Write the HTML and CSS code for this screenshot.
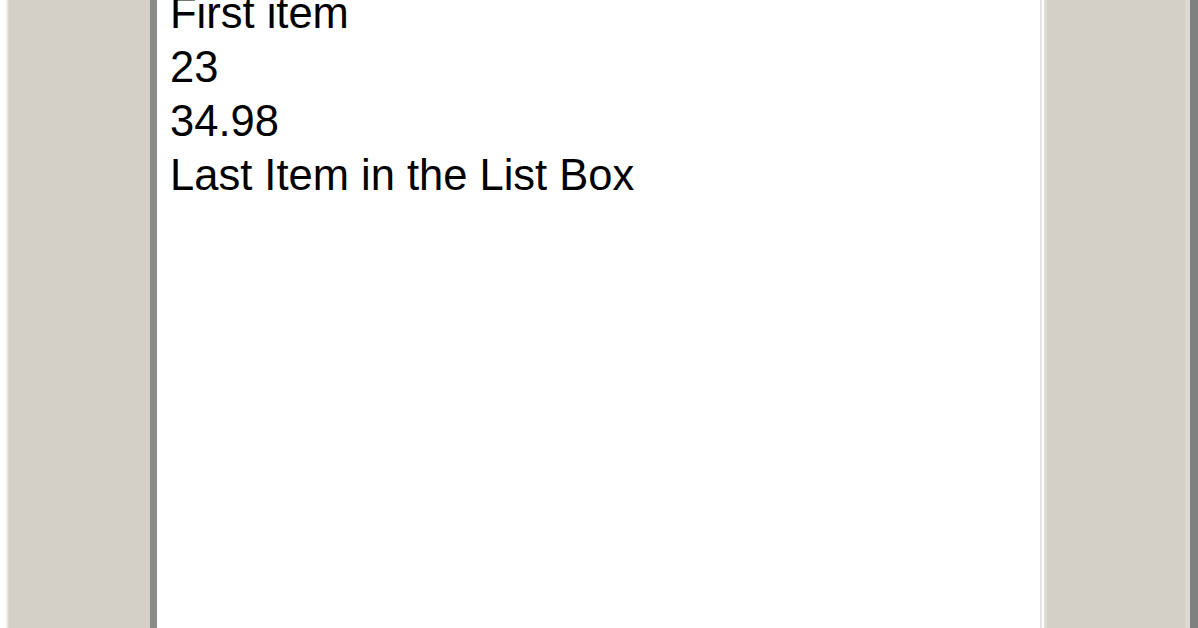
FILE: index.html
```html
<!DOCTYPE html>
<html>
<head>
<meta charset="utf-8">
<link rel="stylesheet" href="styles.css">
</head>
<body>
<div class="frame">
  <div class="edge-white"></div>
  <div class="panel-left"></div>
  <div class="listbox">
    <ul class="items">
      <li>First item</li>
      <li>23</li>
      <li>34.98</li>
      <li>Last Item in the List Box</li>
    </ul>
  </div>
  <div class="panel-right"></div>
  <div class="edge-dark"></div>
</div>
</body>
</html>
```
FILE: styles.css
```css
html, body {
  margin: 0;
  padding: 0;
  width: 1198px;
  height: 628px;
  overflow: hidden;
  background: #d4d0c8;
}
.frame {
  display: flex;
  width: 1198px;
  height: 628px;
}
.edge-white {
  width: 9px;
  flex: none;
  background: linear-gradient(to right, #ffffff 0, #ffffff 5px, #eeede9 7px, #d4d0c8 9px);
}
.panel-left {
  width: 141px;
  flex: none;
  background: #d4d0c8;
}
.listbox {
  width: 883px;
  flex: none;
  background: #ffffff;
  border-left: 7px solid #404040;
  border-image: linear-gradient(to right, #8a8a88 0, #8a8a88 3px, #3c3c3c 3px, #3c3c3c 7px) 1;
  border-right: 0;
  border-top: 0;
  border-bottom: 0;
  overflow: hidden;
}
.items {
  list-style: none;
  margin: -14px 0 0 0;
  padding: 0 0 0 13px;
  font-family: "Liberation Sans", Arial, sans-serif;
  font-size: 43.5px;
  line-height: 54px;
  color: #000000;
}
.panel-right {
  width: 150px;
  flex: none;
  background: linear-gradient(to right, #e6e5e2 0, #e6e5e2 2px, #ffffff 2px, #ffffff 4px, #dedcd6 4px, #dedcd6 7px, #d4d0c8 7px, #d4d0c8 145px, #dcdad6 145px, #dcdad6 150px);
}
.edge-dark {
  width: 8px;
  flex: none;
  background: #808080;
}
```
